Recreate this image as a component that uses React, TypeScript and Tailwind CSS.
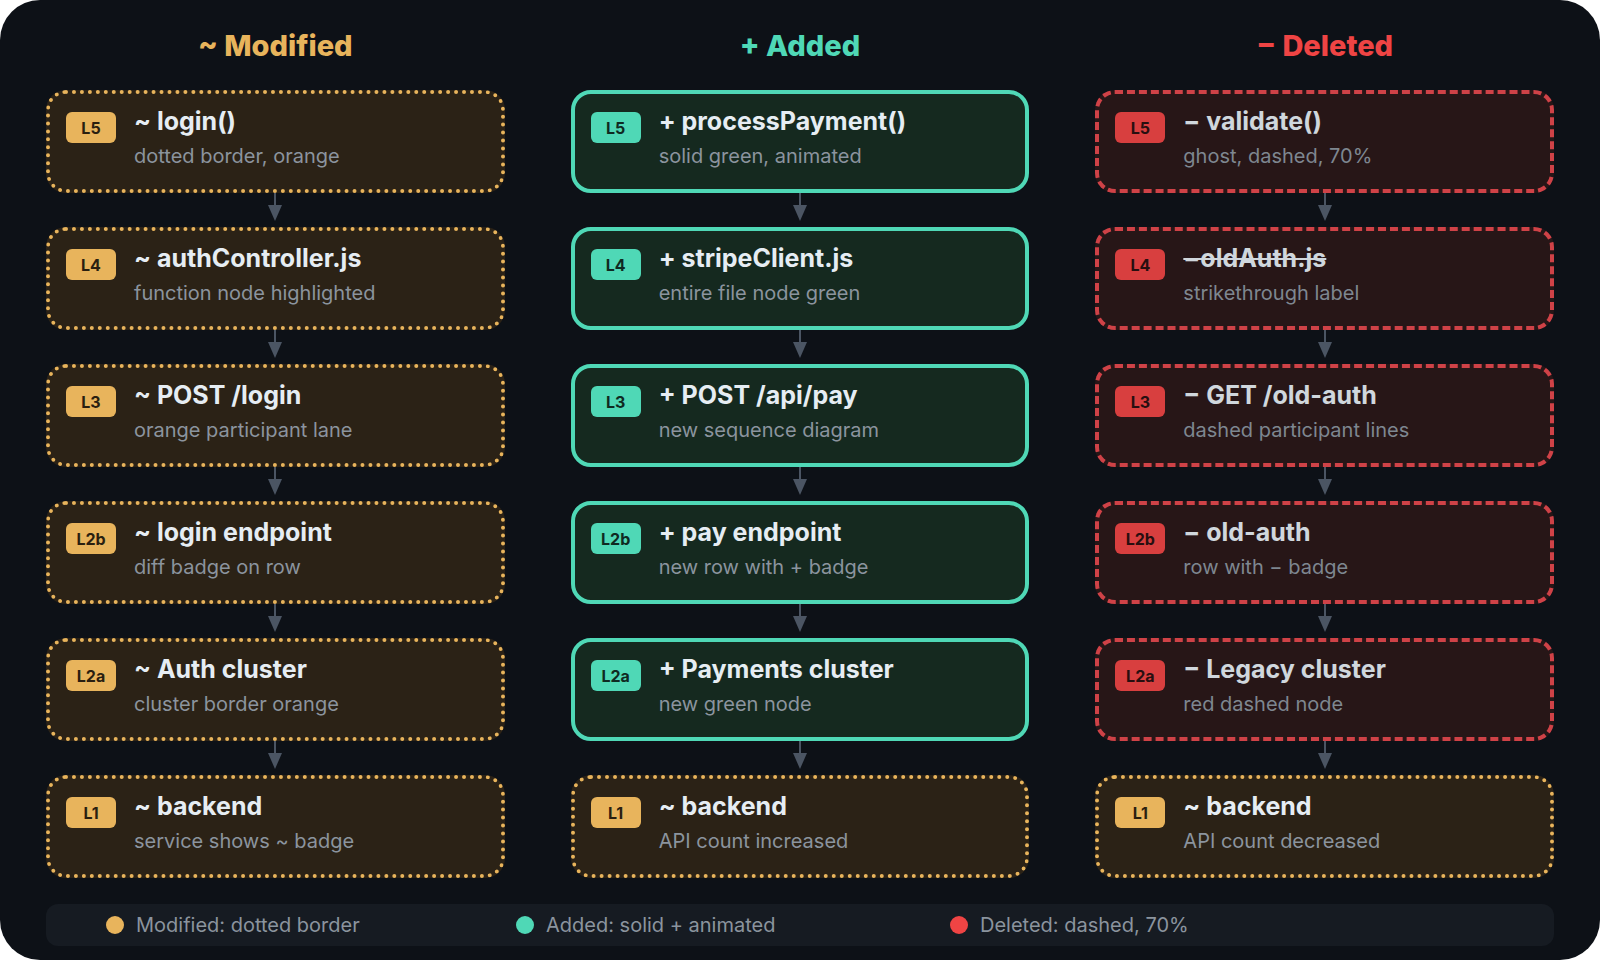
import React from 'react';

type Kind = 'mod' | 'add' | 'del';

type Node = { level: string; title: string; sub: string; kind: Kind; strike?: boolean };

const styles: Record<Kind, { card: string; badge: string }> = {
  mod: {
    card: 'border-[4px] border-dotted border-[#e8b45c] bg-[#2b2216]',
    badge: 'bg-[#e8b45c] text-[#2a1f10]',
  },
  add: {
    card: 'border-[4px] border-solid border-[#4fd8b6] bg-[#15291f]',
    badge: 'bg-[#4fd8b6] text-[#0f2a22]',
  },
  del: {
    card: 'border-[4px] border-dashed border-[#e5484d] bg-[#2a1718]',
    badge: 'bg-[#ef4444] text-[#2a0f10]',
  },
};

const columns: { heading: string; color: string; nodes: Node[] }[] = [
  {
    heading: '~ Modified',
    color: 'text-[#e8b45c]',
    nodes: [
      { level: 'L5', title: '~ login()', sub: 'dotted border, orange', kind: 'mod' },
      { level: 'L4', title: '~ authController.js', sub: 'function node highlighted', kind: 'mod' },
      { level: 'L3', title: '~ POST /login', sub: 'orange participant lane', kind: 'mod' },
      { level: 'L2b', title: '~ login endpoint', sub: 'diff badge on row', kind: 'mod' },
      { level: 'L2a', title: '~ Auth cluster', sub: 'cluster border orange', kind: 'mod' },
      { level: 'L1', title: '~ backend', sub: 'service shows ~ badge', kind: 'mod' },
    ],
  },
  {
    heading: '+ Added',
    color: 'text-[#4fd8b6]',
    nodes: [
      { level: 'L5', title: '+ processPayment()', sub: 'solid green, animated', kind: 'add' },
      { level: 'L4', title: '+ stripeClient.js', sub: 'entire file node green', kind: 'add' },
      { level: 'L3', title: '+ POST /api/pay', sub: 'new sequence diagram', kind: 'add' },
      { level: 'L2b', title: '+ pay endpoint', sub: 'new row with + badge', kind: 'add' },
      { level: 'L2a', title: '+ Payments cluster', sub: 'new green node', kind: 'add' },
      { level: 'L1', title: '~ backend', sub: 'API count increased', kind: 'mod' },
    ],
  },
  {
    heading: '− Deleted',
    color: 'text-[#ef4444]',
    nodes: [
      { level: 'L5', title: '− validate()', sub: 'ghost, dashed, 70%', kind: 'del' },
      { level: 'L4', title: '−oldAuth.js', sub: 'strikethrough label', kind: 'del', strike: true },
      { level: 'L3', title: '− GET /old-auth', sub: 'dashed participant lines', kind: 'del' },
      { level: 'L2b', title: '− old-auth', sub: 'row with − badge', kind: 'del' },
      { level: 'L2a', title: '− Legacy cluster', sub: 'red dashed node', kind: 'del' },
      { level: 'L1', title: '~ backend', sub: 'API count decreased', kind: 'mod' },
    ],
  },
];

const Arrow: React.FC = () => (
  <div className="flex h-[34px] justify-center">
    <svg width="20" height="34" viewBox="0 0 20 34">
      <line x1="10" y1="0" x2="10" y2="18" stroke="#4b5563" strokeWidth="2" />
      <polygon points="3,12 17,12 10,28" fill="#4b5563" />
    </svg>
  </div>
);

const Card: React.FC<{ node: Node }> = ({ node }) => {
  const s = styles[node.kind];
  return (
    <div className={`flex h-[103px] items-start gap-[18px] rounded-[20px] px-[16px] pt-[10px] ${s.card}`}>
      <div className={`mt-[8px] flex h-[31px] min-w-[50px] items-center justify-center rounded-md px-2 text-[16px] font-bold ${s.badge}`}>
        {node.level}
      </div>
      <div className="flex flex-col">
        <div className={`text-[25px] font-bold leading-[34px] text-[#e6edf3] ${node.strike ? 'line-through' : ''}`}>
          {node.title}
        </div>
        <div className="mt-[4px] text-[20px] leading-[28px] text-[#8b949e]">{node.sub}</div>
      </div>
    </div>
  );
};

export default function App() {
  return (
    <div className="h-[960px] w-[1600px] bg-white" style={{ fontFamily: 'Inter, "Noto Sans", sans-serif' }}>
      <div className="flex h-full w-full flex-col rounded-[40px] bg-[#0d1117] px-[46px] pt-[26px]">
        <div className="grid grid-cols-3 gap-[66px]">
          {columns.map((col) => (
            <div key={col.heading} className="flex flex-col">
              <div className={`mb-[24px] text-center text-[29px] font-extrabold leading-[40px] ${col.color}`}>
                {col.heading}
              </div>
              {col.nodes.map((n, i) => (
                <React.Fragment key={n.title + i}>
                  {i > 0 && <Arrow />}
                  <div className={n.kind === 'del' ? 'opacity-90' : ''}>
                    <Card node={n} />
                  </div>
                </React.Fragment>
              ))}
            </div>
          ))}
        </div>
        <div className="mt-[26px] flex h-[42px] items-center rounded-xl bg-[#161b22] px-[60px] text-[20px] text-[#8b949e]">
          <div className="flex w-[410px] items-center gap-3">
            <span className="h-[18px] w-[18px] rounded-full bg-[#e8b45c]" />
            Modified: dotted border
          </div>
          <div className="flex w-[434px] items-center gap-3">
            <span className="h-[18px] w-[18px] rounded-full bg-[#4fd8b6]" />
            Added: solid + animated
          </div>
          <div className="flex items-center gap-3">
            <span className="h-[18px] w-[18px] rounded-full bg-[#ef4444]" />
            Deleted: dashed, 70%
          </div>
        </div>
      </div>
    </div>
  );
}
